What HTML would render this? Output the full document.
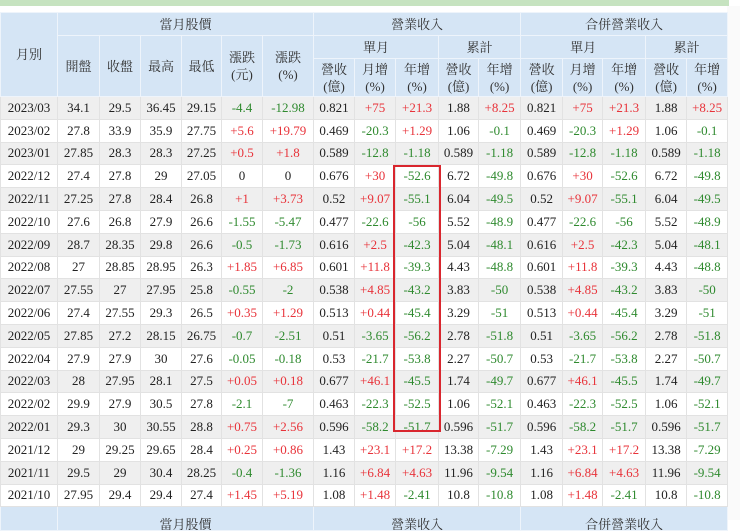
<!DOCTYPE html>
<html><head><meta charset="utf-8"><style>
body{margin:0;background:#fff;width:740px;height:520px;overflow:hidden;position:relative;font-family:"Liberation Serif","Noto Serif CJK TC","Noto Serif CJK SC",serif;}
.top{position:absolute;left:0;top:0;width:729px;height:6px;background:#c6e3c0;}
.rt{position:absolute;left:727px;top:6px;width:13px;height:514px;background:#fafafa;}
table{position:absolute;left:0;top:12px;border-collapse:collapse;table-layout:fixed;width:727px;font-size:13px;color:#222;}
td,th{text-align:center;padding:0;border:1px solid #e2e2e2;overflow:hidden;white-space:nowrap;}
td{line-height:14px;}
th{background:#d5e5f5;font-weight:normal;border-color:#eef4fb;line-height:17px;color:#333;}
tr.d{height:22.8px;}
tr.d:nth-child(even) td{background:#efefef;}
.r{color:#e8333a}.g{color:#2f8a2f}
.box{position:absolute;left:393px;top:165px;width:44px;height:263px;border:2px solid #d9262e;}
</style></head><body>
<div class="top"></div><div class="rt"></div>
<table>
<colgroup><col style="width:57px"><col style="width:42px"><col style="width:41px"><col style="width:41px"><col style="width:40px"><col style="width:41px"><col style="width:51px"><col style="width:41px"><col style="width:41px"><col style="width:43px"><col style="width:40px"><col style="width:42px"><col style="width:42px"><col style="width:40px"><col style="width:43px"><col style="width:41px"><col style="width:41px"></colgroup>
<tr style="height:23px"><th rowspan="3">月別</th><th colspan="6">當月股價</th><th colspan="5">營業收入</th><th colspan="5">合併營業收入</th></tr>
<tr style="height:23px"><th rowspan="2">開盤</th><th rowspan="2">收盤</th><th rowspan="2">最高</th><th rowspan="2">最低</th><th rowspan="2">漲跌<br>(元)</th><th rowspan="2">漲跌<br>(%)</th><th colspan="3">單月</th><th colspan="2">累計</th><th colspan="3">單月</th><th colspan="2">累計</th></tr>
<tr style="height:38px"><th>營收<br>(億)</th><th>月增<br>(%)</th><th>年增<br>(%)</th><th>營收<br>(億)</th><th>年增<br>(%)</th><th>營收<br>(億)</th><th>月增<br>(%)</th><th>年增<br>(%)</th><th>營收<br>(億)</th><th>年增<br>(%)</th></tr>
<tr class="d"><td>2023/03</td><td>34.1</td><td>29.5</td><td>36.45</td><td>29.15</td><td class="g">-4.4</td><td class="g">-12.98</td><td>0.821</td><td class="r">+75</td><td class="r">+21.3</td><td>1.88</td><td class="r">+8.25</td><td>0.821</td><td class="r">+75</td><td class="r">+21.3</td><td>1.88</td><td class="r">+8.25</td></tr>
<tr class="d"><td>2023/02</td><td>27.8</td><td>33.9</td><td>35.9</td><td>27.75</td><td class="r">+5.6</td><td class="r">+19.79</td><td>0.469</td><td class="g">-20.3</td><td class="r">+1.29</td><td>1.06</td><td class="g">-0.1</td><td>0.469</td><td class="g">-20.3</td><td class="r">+1.29</td><td>1.06</td><td class="g">-0.1</td></tr>
<tr class="d"><td>2023/01</td><td>27.85</td><td>28.3</td><td>28.3</td><td>27.25</td><td class="r">+0.5</td><td class="r">+1.8</td><td>0.589</td><td class="g">-12.8</td><td class="g">-1.18</td><td>0.589</td><td class="g">-1.18</td><td>0.589</td><td class="g">-12.8</td><td class="g">-1.18</td><td>0.589</td><td class="g">-1.18</td></tr>
<tr class="d"><td>2022/12</td><td>27.4</td><td>27.8</td><td>29</td><td>27.05</td><td>0</td><td>0</td><td>0.676</td><td class="r">+30</td><td class="g">-52.6</td><td>6.72</td><td class="g">-49.8</td><td>0.676</td><td class="r">+30</td><td class="g">-52.6</td><td>6.72</td><td class="g">-49.8</td></tr>
<tr class="d"><td>2022/11</td><td>27.25</td><td>27.8</td><td>28.4</td><td>26.8</td><td class="r">+1</td><td class="r">+3.73</td><td>0.52</td><td class="r">+9.07</td><td class="g">-55.1</td><td>6.04</td><td class="g">-49.5</td><td>0.52</td><td class="r">+9.07</td><td class="g">-55.1</td><td>6.04</td><td class="g">-49.5</td></tr>
<tr class="d"><td>2022/10</td><td>27.6</td><td>26.8</td><td>27.9</td><td>26.6</td><td class="g">-1.55</td><td class="g">-5.47</td><td>0.477</td><td class="g">-22.6</td><td class="g">-56</td><td>5.52</td><td class="g">-48.9</td><td>0.477</td><td class="g">-22.6</td><td class="g">-56</td><td>5.52</td><td class="g">-48.9</td></tr>
<tr class="d"><td>2022/09</td><td>28.7</td><td>28.35</td><td>29.8</td><td>26.6</td><td class="g">-0.5</td><td class="g">-1.73</td><td>0.616</td><td class="r">+2.5</td><td class="g">-42.3</td><td>5.04</td><td class="g">-48.1</td><td>0.616</td><td class="r">+2.5</td><td class="g">-42.3</td><td>5.04</td><td class="g">-48.1</td></tr>
<tr class="d"><td>2022/08</td><td>27</td><td>28.85</td><td>28.95</td><td>26.3</td><td class="r">+1.85</td><td class="r">+6.85</td><td>0.601</td><td class="r">+11.8</td><td class="g">-39.3</td><td>4.43</td><td class="g">-48.8</td><td>0.601</td><td class="r">+11.8</td><td class="g">-39.3</td><td>4.43</td><td class="g">-48.8</td></tr>
<tr class="d"><td>2022/07</td><td>27.55</td><td>27</td><td>27.95</td><td>25.8</td><td class="g">-0.55</td><td class="g">-2</td><td>0.538</td><td class="r">+4.85</td><td class="g">-43.2</td><td>3.83</td><td class="g">-50</td><td>0.538</td><td class="r">+4.85</td><td class="g">-43.2</td><td>3.83</td><td class="g">-50</td></tr>
<tr class="d"><td>2022/06</td><td>27.4</td><td>27.55</td><td>29.3</td><td>26.5</td><td class="r">+0.35</td><td class="r">+1.29</td><td>0.513</td><td class="r">+0.44</td><td class="g">-45.4</td><td>3.29</td><td class="g">-51</td><td>0.513</td><td class="r">+0.44</td><td class="g">-45.4</td><td>3.29</td><td class="g">-51</td></tr>
<tr class="d"><td>2022/05</td><td>27.85</td><td>27.2</td><td>28.15</td><td>26.75</td><td class="g">-0.7</td><td class="g">-2.51</td><td>0.51</td><td class="g">-3.65</td><td class="g">-56.2</td><td>2.78</td><td class="g">-51.8</td><td>0.51</td><td class="g">-3.65</td><td class="g">-56.2</td><td>2.78</td><td class="g">-51.8</td></tr>
<tr class="d"><td>2022/04</td><td>27.9</td><td>27.9</td><td>30</td><td>27.6</td><td class="g">-0.05</td><td class="g">-0.18</td><td>0.53</td><td class="g">-21.7</td><td class="g">-53.8</td><td>2.27</td><td class="g">-50.7</td><td>0.53</td><td class="g">-21.7</td><td class="g">-53.8</td><td>2.27</td><td class="g">-50.7</td></tr>
<tr class="d"><td>2022/03</td><td>28</td><td>27.95</td><td>28.1</td><td>27.5</td><td class="r">+0.05</td><td class="r">+0.18</td><td>0.677</td><td class="r">+46.1</td><td class="g">-45.5</td><td>1.74</td><td class="g">-49.7</td><td>0.677</td><td class="r">+46.1</td><td class="g">-45.5</td><td>1.74</td><td class="g">-49.7</td></tr>
<tr class="d"><td>2022/02</td><td>29.9</td><td>27.9</td><td>30.5</td><td>27.8</td><td class="g">-2.1</td><td class="g">-7</td><td>0.463</td><td class="g">-22.3</td><td class="g">-52.5</td><td>1.06</td><td class="g">-52.1</td><td>0.463</td><td class="g">-22.3</td><td class="g">-52.5</td><td>1.06</td><td class="g">-52.1</td></tr>
<tr class="d"><td>2022/01</td><td>29.3</td><td>30</td><td>30.55</td><td>28.8</td><td class="r">+0.75</td><td class="r">+2.56</td><td>0.596</td><td class="g">-58.2</td><td class="g">-51.7</td><td>0.596</td><td class="g">-51.7</td><td>0.596</td><td class="g">-58.2</td><td class="g">-51.7</td><td>0.596</td><td class="g">-51.7</td></tr>
<tr class="d"><td>2021/12</td><td>29</td><td>29.25</td><td>29.65</td><td>28.4</td><td class="r">+0.25</td><td class="r">+0.86</td><td>1.43</td><td class="r">+23.1</td><td class="r">+17.2</td><td>13.38</td><td class="g">-7.29</td><td>1.43</td><td class="r">+23.1</td><td class="r">+17.2</td><td>13.38</td><td class="g">-7.29</td></tr>
<tr class="d"><td>2021/11</td><td>29.5</td><td>29</td><td>30.4</td><td>28.25</td><td class="g">-0.4</td><td class="g">-1.36</td><td>1.16</td><td class="r">+6.84</td><td class="r">+4.63</td><td>11.96</td><td class="g">-9.54</td><td>1.16</td><td class="r">+6.84</td><td class="r">+4.63</td><td>11.96</td><td class="g">-9.54</td></tr>
<tr class="d"><td>2021/10</td><td>27.95</td><td>29.4</td><td>29.4</td><td>27.4</td><td class="r">+1.45</td><td class="r">+5.19</td><td>1.08</td><td class="r">+1.48</td><td class="g">-2.41</td><td>10.8</td><td class="g">-10.8</td><td>1.08</td><td class="r">+1.48</td><td class="g">-2.41</td><td>10.8</td><td class="g">-10.8</td></tr>
<tr style="height:23px"><th></th><th colspan="6" style="vertical-align:bottom;line-height:10px;height:23px">當月股價</th><th colspan="5" style="vertical-align:bottom;line-height:10px">營業收入</th><th colspan="5" style="vertical-align:bottom;line-height:10px">合併營業收入</th></tr>
</table>
<div class="box"></div>
</body></html>
